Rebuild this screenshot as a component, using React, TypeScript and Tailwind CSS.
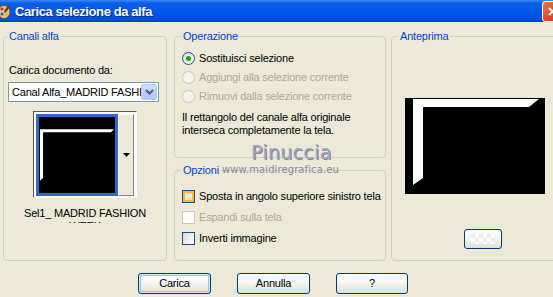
import React from "react";

const ui = "font-['Liberation_Sans',Arial,sans-serif] text-[11px] leading-[13px] tracking-[-0.2px]";

const Legend = ({ text, offset }: { text: string; offset: string }) => (
  <legend className={`${offset} px-[2px] text-[#0046d5] leading-[13px]`}>{text}</legend>
);

const Radio = ({ label, checked, disabled }: { label: string; checked?: boolean; disabled?: boolean }) => (
  <div className="flex items-center h-[19px] gap-[4px]">
    <span
      className={
        disabled
          ? "w-[13px] h-[13px] rounded-full border border-[#cac8bb] bg-[#f3f2ec]"
          : "w-[13px] h-[13px] rounded-full border border-[#1c5180] bg-gradient-to-br from-[#dcdcd4] to-white flex items-center justify-center"
      }
    >
      {checked && <span className="w-[5px] h-[5px] rounded-full bg-[#21a121]" />}
    </span>
    <span className={disabled ? "text-[#aca899]" : "text-black"}>{label}</span>
  </div>
);

const Check = ({ label, hover, disabled }: { label: string; hover?: boolean; disabled?: boolean }) => {
  let box = "border-[#1c5180] bg-gradient-to-br from-[#dcdcd4] to-white";
  if (hover) box = "border-[#1c5180] bg-[#fbe6c0] shadow-[inset_0_0_0_2px_#f8b83e]";
  if (disabled) box = "border-[#cac8bb] bg-white";
  return (
    <div className="flex items-center h-[21px] gap-[4px]">
      <span className={`w-[13px] h-[13px] border ${box}`} />
      <span className={disabled ? "text-[#aca899]" : "text-black"}>{label}</span>
    </div>
  );
};

const XPButton = ({ children, primary, className }: { children?: React.ReactNode; primary?: boolean; className?: string }) => (
  <button
    className={`${className} rounded-[3px] border border-[#003c74] bg-gradient-to-b from-white via-[#f4f4f0] to-[#e0dfd6] text-black flex items-center justify-center ${
      primary ? "shadow-[inset_0_0_0_1px_#cee7ff,inset_0_0_0_2px_#a3c1ef]" : ""
    }`}
  >
    {children}
  </button>
);

const TitleIcon = () => (
  <svg width="14" height="15" viewBox="0 0 14 15" className="ml-[-3px] mt-[1px]">
    <ellipse cx="7" cy="8" rx="6" ry="6.5" fill="#e9c38a" stroke="#8a4b1c" strokeWidth="1" />
    <circle cx="5" cy="5" r="1.6" fill="#d32f2f" />
    <circle cx="9" cy="6" r="1.5" fill="#2e7d32" />
    <circle cx="5" cy="10" r="1.5" fill="#1565c0" />
    <circle cx="9.5" cy="10.5" r="1.3" fill="#f9a825" />
    <path d="M11 1 L13 3 L8 9 L7 8 Z" fill="#6d3a12" />
  </svg>
);

export default function App() {
  return (
    <div className={`w-[553px] h-[297px] overflow-hidden bg-[#ece9d8] ${ui}`}>
      <div className="w-[568px] relative">
        {/* title bar */}
        <div className="h-[22px] flex items-center bg-[linear-gradient(to_bottom,#3a8af5_0px,#0b5fe9_3px,#0056e6_50%,#0051de_86%,#0041b8_100%)]">
          <TitleIcon />
          <span className="ml-[4px] font-['Liberation_Sans',Arial,sans-serif] font-bold text-[13px] tracking-[-0.4px] text-white [text-shadow:1px_1px_0_#0a2a8a]">
            Carica selezione da alfa
          </span>
          <div className="ml-auto mr-[5px] w-[21px] h-[21px] rounded-[3px] border border-white bg-gradient-to-br from-[#e9774f] via-[#d9502c] to-[#c33c1c] flex items-center justify-center">
            <svg width="11" height="11" viewBox="0 0 11 11">
              <path d="M2 2 L9 9 M9 2 L2 9" stroke="white" strokeWidth="2" />
            </svg>
          </div>
        </div>

        {/* body */}
        <div className="flex gap-[7px] pl-[3px] pt-[8px]">
          {/* Canali alfa */}
          <fieldset className="shrink-0 w-[164px] h-[231px] min-w-0 rounded-[4px] border border-[#d0d0bf]">
            <Legend text="Canali alfa" offset="ml-[3px]" />
            <div className="ml-[5px] mt-[21px]">Carica documento da:</div>
            <div className="ml-[4px] mt-[5px] w-[151px] h-[20px] border border-[#7f9db9] bg-white flex items-center">
              <span className="flex-1 overflow-hidden whitespace-nowrap pl-[3px]">Canal Alfa_MADRID FASHION WEEK</span>
              <span className="w-[16px] h-[16px] mr-[1px] rounded-[2px] border border-[#b9c9ef] bg-gradient-to-b from-[#cfdcfd] to-[#b2c6f5] flex items-center justify-center">
                <svg width="9" height="6" viewBox="0 0 9 6">
                  <path d="M1 1 L4.5 4.5 L8 1" fill="none" stroke="#4d6185" strokeWidth="2" />
                </svg>
              </span>
            </div>
            <div className="mx-auto mt-[9px] w-[104px] h-[87px] border border-t-[#5a584f] border-l-[#5a584f] border-r-white border-b-white flex p-[2px] bg-white">
              <div className="w-[82px] h-[82px] bg-[#316ac5] p-[3px]">
                <svg width="76" height="76" viewBox="0 0 75 75" className="block">
                  <rect width="75" height="75" fill="black" />
                  <polygon points="1,12 74,12 71,15 4,15 4,60 1,63" fill="white" />
                </svg>
              </div>
              <div className="flex-1 h-[82px] border border-t-white border-l-white border-r-[#808080] border-b-[#808080] bg-[#ece9d8] flex items-center justify-center">
                <svg width="7" height="4" viewBox="0 0 7 4">
                  <path d="M0 0 L7 0 L3.5 4 Z" fill="black" />
                </svg>
              </div>
            </div>
            <div className="mx-auto mt-[9px] w-[136px] h-[16px] overflow-hidden text-center">Sel1_ MADRID FASHION WEEK</div>
          </fieldset>

          {/* middle column */}
          <div className="shrink-0 flex flex-col gap-[6px] w-[212px]">
            <fieldset className="h-[128px] min-w-0 rounded-[4px] border border-[#d0d0bf] pl-[7px]">
              <Legend text="Operazione" offset="ml-[-1px]" />
              <div className="mt-[6px]">
                <Radio label="Sostituisci selezione" checked />
                <Radio label="Aggiungi alla selezione corrente" disabled />
                <Radio label="Rimuovi dalla selezione corrente" disabled />
              </div>
              <p className="mt-[5px]">
                Il rettangolo del canale alfa originale
                <br />
                interseca completamente la tela.
              </p>
            </fieldset>
            <fieldset className="h-[97px] min-w-0 rounded-[4px] border border-[#d0d0bf] pl-[7px]">
              <Legend text="Opzioni" offset="ml-[-1px]" />
              <div className="mt-[9px]">
                <Check label="Sposta in angolo superiore sinistro tela" hover />
                <Check label="Espandi sulla tela" disabled />
                <Check label="Inverti immagine" />
              </div>
            </fieldset>
          </div>

          {/* Anteprima */}
          <fieldset className="shrink-0 ml-[-2px] w-[180px] h-[231px] min-w-0 rounded-[4px] border border-[#d0d0bf]">
            <Legend text="Anteprima" offset="ml-[6px]" />
            <div className="ml-[13px] mt-[55px] w-[140px] h-[96px]">
              <svg width="140" height="96" viewBox="0 0 140 96" className="block">
                <rect width="140" height="96" fill="black" />
                <polygon points="8,1 134,1 124,9 18,9 18,80 8,87" fill="white" />
              </svg>
            </div>
            <XPButton className="ml-[72px] mt-[35px] w-[38px] h-[20px]">
              <span className="w-[24px] h-[10px] bg-[repeating-conic-gradient(#ffffff_0_25%,#ececec_0_50%)] bg-[length:8px_8px]" />
            </XPButton>
          </fieldset>
        </div>

        {/* bottom buttons */}
        <div className="flex gap-[26px] pl-[138px] mt-[12px]">
          <XPButton primary className="w-[73px] h-[21px]">Carica</XPButton>
          <XPButton className="w-[73px] h-[21px]">Annulla</XPButton>
          <XPButton className="w-[72px] h-[21px]">?</XPButton>
        </div>

        {/* watermarks */}
        <div className="absolute left-[251px] top-[141px] font-['DejaVu_Sans',sans-serif] text-[19px] leading-[22px] tracking-[0.3px] text-[#a4a4c0] [text-shadow:1px_1px_0_#7f7f97]">
          Pinuccia
        </div>
        <div className="absolute left-[222px] top-[164px] font-['DejaVu_Sans',sans-serif] text-[10px] leading-[12px] tracking-[0.1px] text-[#8a8a9c]">
          www.maidiregrafica.eu
        </div>
      </div>
    </div>
  );
}
